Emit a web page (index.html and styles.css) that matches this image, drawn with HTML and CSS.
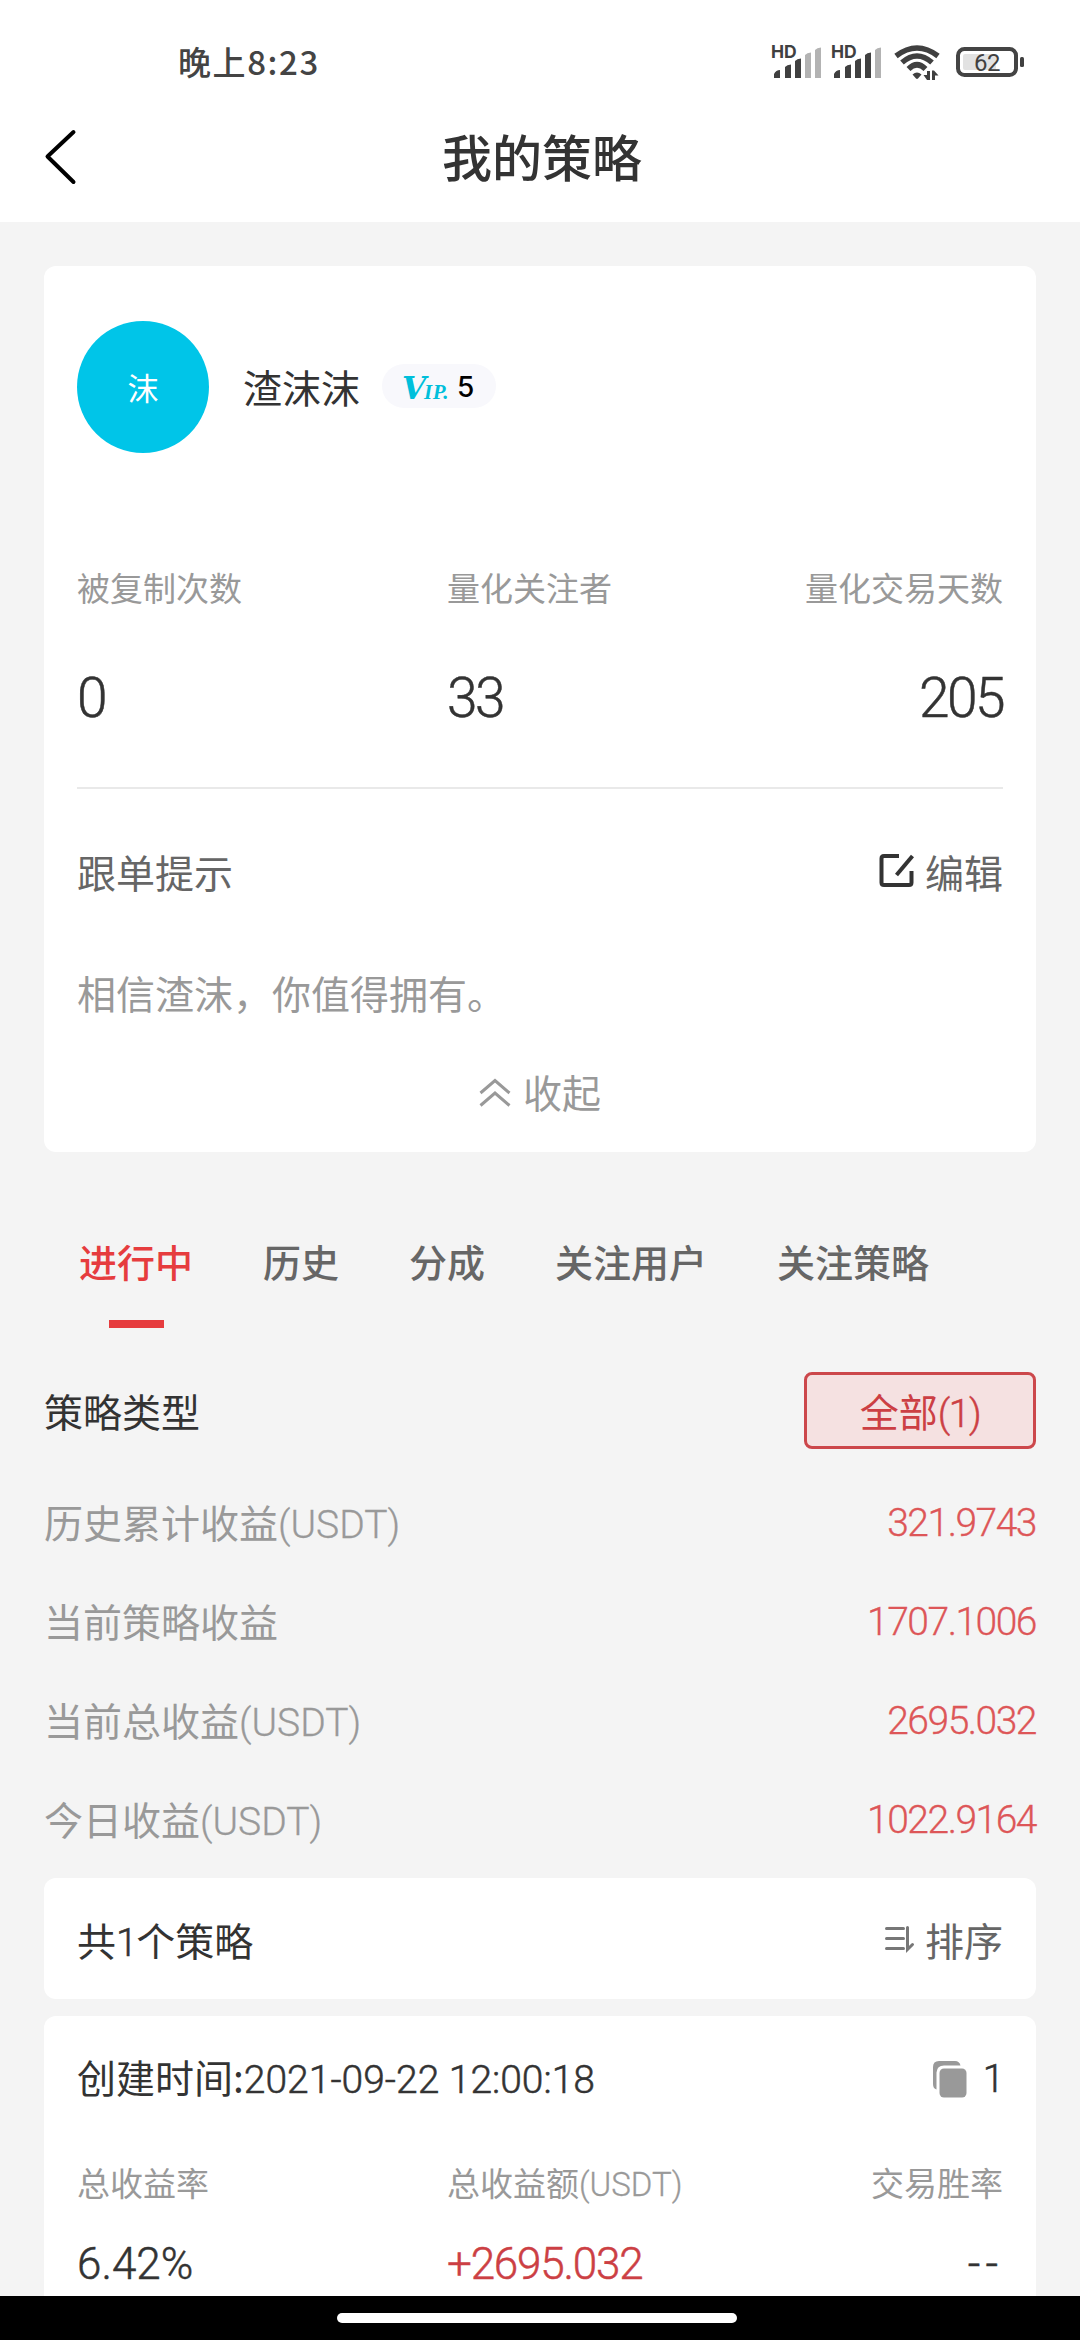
FILE: index.html
```html
<!DOCTYPE html>
<html lang="zh-CN">
<head>
<meta charset="utf-8">
<title>我的策略</title>
<link rel="stylesheet" href="styles.css">
</head>
<body>
<div class="screen">
  <header class="header">
    <div class="status">
      <span class="clock">晚上8:23</span>
      <svg class="status-icons" width="256" height="40" viewBox="0 0 256 40">
        <g class="ink">
          <text class="hd" x="-1" y="18">HD</text>
          <path d="M2 38v-4q2-4 6-4v8q0 0-1 0h-4q-1 0-1 0zM13 38v-11q2-2.500 6-2.500v13.500zM23 38v-17q2-2.500 6-2.500v19.500z"/>
          <path class="dim" d="M33 38v-23q2-2.500 6-2.500v25.500zM43 38v-28q2-2.500 6-2.500v30.500z"/>
        </g>
        <g class="ink" transform="translate(60 0)">
          <text class="hd" x="-1" y="18">HD</text>
          <path d="M2 38v-4q2-4 6-4v8q0 0-1 0h-4q-1 0-1 0zM13 38v-11q2-2.500 6-2.500v13.500zM23 38v-17q2-2.500 6-2.500v19.500zM33 38v-23q2-2.500 6-2.500v25.500z"/>
          <path class="dim" d="M43 38v-28q2-2.500 6-2.500v30.500z"/>
        </g>
        <path class="wifi" d="M124 16Q145 0 166 16M130 22.500Q145 9.500 160 22.500M136.500 29Q145 20.500 153.500 29"/>
        <path class="ink" d="M140.500 34.500q4.500-4 9 0l-3.500 4q-1 .9-2 0zM158 31h-3v4h-3.500l3.500 5h3zM160 40v-9.500h2l4.500 5h-3.500v4.500z"/>
        <rect class="battery" x="186" y="9" width="58" height="26" rx="6.500"/>
        <rect class="charge" x="191" y="14" width="33" height="16" rx="2"/>
        <rect class="ink" x="248" y="17" width="4" height="10" rx="1.500"/>
        <text class="level" x="215" y="31" text-anchor="middle">62</text>
      </svg>
    </div>
    <div class="titlebar">
      <svg class="back" width="32" height="56" viewBox="0 0 32 56"><path d="M28.500 3 2.500 27.500l26 25.500"/></svg>
      <h1 class="title">我的策略</h1>
    </div>
  </header>

  <main class="content">
    <section class="card profile">
      <div class="user">
        <div class="avatar">沫</div>
        <div class="name">渣沫沫</div>
        <div class="badge"><span class="vip">V<span class="vip-tail">IP.</span></span><span class="vip-level">5</span></div>
      </div>
      <div class="stats">
        <div class="stat"><div class="stat-label">被复制次数</div><div class="stat-value">0</div></div>
        <div class="stat"><div class="stat-label">量化关注者</div><div class="stat-value">33</div></div>
        <div class="stat end"><div class="stat-label">量化交易天数</div><div class="stat-value">205</div></div>
      </div>
      <div class="tip-head">
        <span>跟单提示</span>
        <span class="edit">
          <svg width="36" height="36" viewBox="0 0 36 36"><path d="M20 3H5q-2.500 0-2.500 2.500v24Q2.500 32 5 32h25q2.500 0 2.500-2.500V18"/><path d="M33.500 3 17.500 22"/></svg>编辑
        </span>
      </div>
      <p class="tip">相信渣沫，你值得拥有。</p>
      <div class="fold">
        <svg width="32" height="30" viewBox="0 0 32 30"><path d="M1.500 15 16 2.500 30.500 15M1.500 27.500 16 15l14.500 12.500"/></svg>收起
      </div>
    </section>

    <nav class="tabs">
      <span class="tab active">进行中</span>
      <span class="tab">历史</span>
      <span class="tab">分成</span>
      <span class="tab">关注用户</span>
      <span class="tab">关注策略</span>
    </nav>

    <div class="type">
      <span class="type-label">策略类型</span>
      <span class="filter">全部<span class="num">(1)</span></span>
    </div>

    <div class="totals">
      <div class="total"><span class="total-label">历史累计收益<span class="unit">(USDT)</span></span><span class="amount">321.9743</span></div>
      <div class="total"><span class="total-label">当前策略收益</span><span class="amount">1707.1006</span></div>
      <div class="total"><span class="total-label">当前总收益<span class="unit">(USDT)</span></span><span class="amount">2695.032</span></div>
      <div class="total"><span class="total-label">今日收益<span class="unit">(USDT)</span></span><span class="amount">1022.9164</span></div>
    </div>

    <section class="card count">
      <span class="count-text">共<span class="num">1</span>个策略</span>
      <span class="sort">
        <svg width="30" height="28" viewBox="0 0 30 28"><path d="M1.500 3.500h17M1.500 13.500h17M1.500 23.500h17M22.500 2.500v22l5-5"/></svg>排序
      </span>
    </section>

    <section class="card strategy">
      <div class="created">
        <span>创建时间:<span class="date">2021-09-22 12:00:18</span></span>
        <span class="copies">
          <svg width="36" height="38" viewBox="0 0 36 38"><path d="M4.500 29.500Q1 28.500 1 24V7q0-6 6-6h16q4.500 0 5.500 4.500H12q-7 0-7.500 7z"/><rect x="7.500" y="8.500" width="27" height="29" rx="4.500"/></svg><span class="num">1</span>
        </span>
      </div>
      <div class="results">
        <div><div class="stat-label">总收益率</div><div class="result">6.42%</div></div>
        <div><div class="stat-label">总收益额<span class="unit">(USDT)</span></div><div class="result gain">+2695.032</div></div>
        <div class="end"><div class="stat-label">交易胜率</div><div class="result dashes">--</div></div>
      </div>
    </section>
  </main>

  <footer class="navbar"><div class="pill"></div></footer>
</div>
</body>
</html>
```
FILE: styles.css
```css
* { box-sizing: border-box; }
body {
  margin: 0;
  background: #f4f4f4;
  color: #333;
  font-family: "Noto Sans CJK SC", sans-serif;
  font-size: 39px;
  line-height: 60px;
}
svg { display: block; flex: none; fill: none; overflow: visible; }
.screen {
  width: 1080px;
  height: 2340px;
  display: flex;
  flex-direction: column;
  overflow: hidden;
}

/* Header */
.header { height: 222px; flex: none; background: #fff; }
.status {
  height: 100px;
  padding: 0 52px 0 178px;
  display: flex;
  justify-content: space-between;
}
.clock {
  padding-top: 31px;
  font-size: 33px;
  font-weight: 500;
  letter-spacing: 1.600px;
  color: #444;
}
.status-icons { margin-top: 40px; }
.ink { fill: #404040; }
.dim { fill: #b3b3b3; }
.hd { font: 700 17.500px Inter, sans-serif; }
.wifi { stroke: #404040; stroke-width: 5.500; }
.battery { stroke: #444; stroke-width: 4; }
.charge { fill: #e2e2e2; }
.level { font: 24px Roboto, sans-serif; letter-spacing: -.5px; fill: #404040; }
.titlebar {
  height: 114px;
  display: grid;
  grid-template-columns: 100px 1fr 96px;
  align-items: center;
}
.back { margin-left: 45px; stroke: #000; stroke-width: 4; stroke-linecap: round; stroke-linejoin: round; }
.title { margin: -4px 0 0; text-align: center; font-size: 50px; font-weight: 500; }

/* Cards */
.content { flex: 1; min-height: 0; padding: 44px 44px 0; overflow: hidden; }
.card { background: #fff; border-radius: 12px; padding: 0 33px; }
.profile { height: 886px; padding-top: 55px; }
.user { height: 132px; display: flex; align-items: center; }
.avatar {
  width: 132px;
  height: 132px;
  border-radius: 50%;
  background: #00c5e8;
  color: #fff;
  font-size: 31px;
  line-height: 132px;
  text-align: center;
}
.name { margin: -2px 0 0 34px; }
.badge {
  width: 114px;
  height: 44px;
  margin: 0 0 3px 22px;
  padding-left: 20px;
  border-radius: 22px;
  background: #f8f8fc;
  display: flex;
  align-items: center;
  line-height: 44px;
}
.vip { width: 55px; padding-top: 4px; font: italic bold 31px/40px "DejaVu Serif", serif; color: #00bfdb; white-space: nowrap; letter-spacing: -2px; }
.vip-tail { font: italic bold 21px "Liberation Serif", serif; letter-spacing: .5px; }
.vip-level { padding-top: 3px; font: 500 28px/41px Inter, sans-serif; color: #000; }
.stats, .results { display: grid; grid-template-columns: 370px 1fr auto; }
.stats { height: 336px; padding-top: 104px; border-bottom: 2px solid #e9e9e9; }
.stat-label { height: 60px; font-size: 33px; color: #999; }
.end { text-align: right; }
.stat-value { margin-top: 51px; font-size: 55px; letter-spacing: -2.500px; }
.stat-value, .num, .unit, .amount, .result, .date {
  font-family: Roboto, "Noto Sans CJK SC", sans-serif;
  font-weight: 300;
  -webkit-text-stroke: .5px currentColor;
}
.tip-head { margin-top: 52px; display: flex; justify-content: space-between; color: #666; }
.edit, .fold, .sort, .copies { display: flex; align-items: center; }
.edit { gap: 10px; }
.edit svg { stroke: #333; stroke-width: 4; margin-bottom: 1px; }
.tip { margin: 61px 0 0; color: #999; }
.fold { justify-content: center; gap: 12px; margin-top: 39px; color: #999; }
.fold svg { margin-top: 3px; stroke: #999; stroke-width: 3; }

/* Tabs */
.tabs { display: flex; gap: 70px; padding: 79px 0 0 35px; font-size: 38px; font-weight: 500; color: #666; }
.tab { height: 97px; display: flex; flex-direction: column; align-items: center; }
.active { color: #e63c3e; }
.active::after { content: ""; width: 55px; height: 8px; margin-top: 29px; background: #e63c3e; }

.type { display: flex; justify-content: space-between; align-items: center; margin-top: 44px; height: 77px; }
.type-label { margin-top: -1px; }
.filter {
  width: 232px;
  height: 77px;
  border: 3px solid #cc474b;
  border-radius: 8px;
  background: #f5e1e1;
  color: #cc3f44;
  line-height: 70px;
  text-align: center;
}
.num, .amount { letter-spacing: -1.500px; }
.totals { margin-top: 24px; }
.total { height: 99px; display: flex; align-items: center; justify-content: space-between; color: #999; }
.total-label { height: 60px; margin-top: -3px; }
.amount { color: #dd5658; -webkit-text-stroke-width: .3px; }
.unit { -webkit-text-stroke-width: .3px; }

.count { height: 121px; margin-top: 9px; display: flex; align-items: center; justify-content: space-between; }
.count-text, .sort { height: 60px; }
.sort { gap: 10px; color: #666; }
.sort svg { stroke: #777; stroke-width: 3; stroke-linecap: round; }
.strategy { margin-top: 17px; padding-top: 30px; height: 330px; }
.created { height: 60px; display: flex; justify-content: space-between; }
.copies svg { fill: #999; }
.copies { gap: 15px; padding-top: 5px; }
.results { padding-top: 46px; }
.result { margin-top: 22px; font-size: 44px; }
.dashes { letter-spacing: 5px; }
.gain { color: #cc3f44; letter-spacing: -1.200px; }

/* System navigation */
.navbar { height: 44px; flex: none; background: #000; display: flex; justify-content: center; padding-top: 17px; }
.pill { width: 400px; height: 10px; margin-right: 6px; border-radius: 5px; background: #fff; }
```
